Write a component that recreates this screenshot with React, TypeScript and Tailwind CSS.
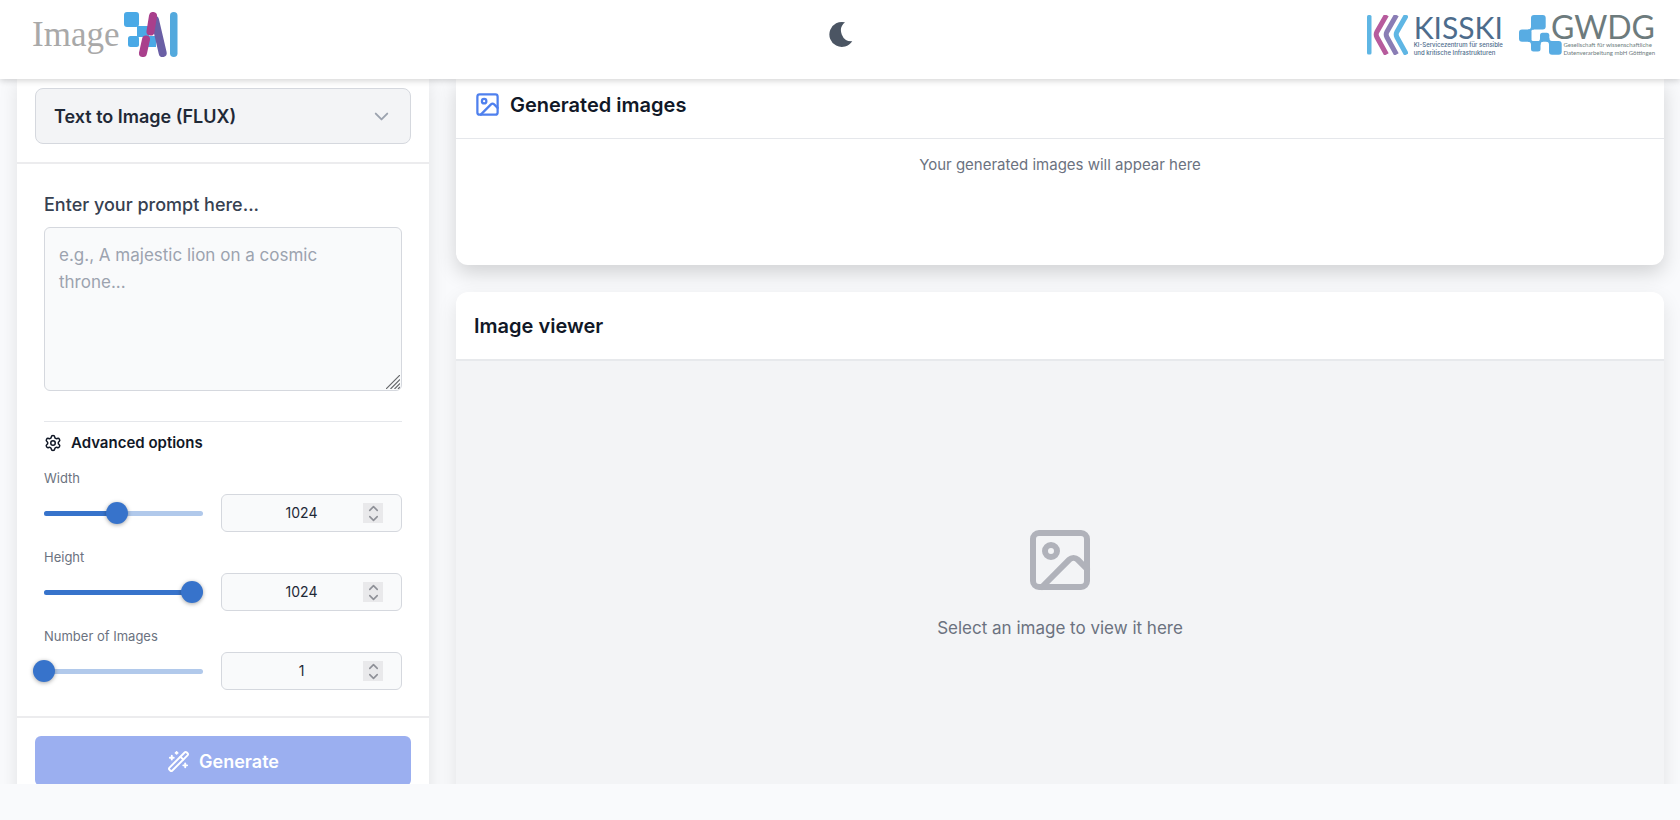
import React, { useId, useState } from "react";
import { ChevronDown, ChevronUp, Settings, WandSparkles } from "lucide-react";

function ImageAiLogo() {
  return (
    <a href="#" aria-label="Image AI" className="flex items-center gap-[5px]">
      <span className="font-['Liberation_Serif',serif] text-[35px] leading-10 text-[#a9a9a9]">Image</span>
      <svg className="h-[46px] w-[54px]" viewBox="0 0 54 46" fill="none">
        <g fill="#4aa9e6">
          <rect x="0" y="0" width="15" height="15" rx="3" />
          <path d="M13 14h12v11H13z" />
          <rect x="4" y="24" width="11" height="11" rx="2.5" />
          <path d="M24 24h8v11h-8z" />
        </g>
        <path d="M31 8 38.700 41" stroke="#6a5fa5" strokeWidth="8" strokeLinecap="round" />
        <path d="M29 4 26.500 19.500" stroke="#a93f8c" strokeWidth="8" strokeLinecap="round" />
        <path d="M22 27.500 19 41" stroke="#a93f8c" strokeWidth="8" strokeLinecap="round" />
        <rect x="46" y="0" width="7.500" height="45" rx="3.750" fill="#53a9dd" />
      </svg>
    </a>
  );
}

function KisskiLogo() {
  return (
    <a href="#" aria-label="KISSKI" className="flex items-center gap-[6px]">
      <svg className="h-10 w-[41px]" viewBox="0 0 41 40" fill="none">
        <rect x="0" y="0" width="4.500" height="39.500" rx="1.500" fill="#5fb6e4" />
        <g strokeWidth="5" strokeLinejoin="round">
          <path d="M19.500 0 9.800 17Q8.600 19.500 9.800 22L19.500 39.500" stroke="#b75b9d" />
          <path d="M29.500 0 19.800 17Q18.600 19.500 19.800 22L29.500 39.500" stroke="#8a7db5" />
          <path d="M39.500 0 29.800 17Q28.600 19.500 29.800 22L39.500 39.500" stroke="#5fb6e4" />
        </g>
      </svg>
      <span className="flex flex-col text-[#4d6c8c]">
        <span className="font-[Lato,sans-serif] text-[30px] leading-7">KISSKI</span>
        <span className="whitespace-nowrap text-[6px] font-medium leading-2">
          KI-Servicezentrum für sensible
          <br />
          und kritische Infrastrukturen
        </span>
      </span>
    </a>
  );
}

function GwdgLogo() {
  return (
    <a href="#" aria-label="GWDG" className="grid items-center">
      <svg className="h-10 w-11 [grid-area:1/1]" viewBox="0 0 44 40" fill="#58ace3">
        <rect x="12" y="0" width="14.700" height="14.500" rx="3" />
        <rect x="0" y="14.500" width="12.500" height="12.300" rx="3" />
        <rect x="12" y="26" width="9.500" height="10.500" rx="2.500" />
        <rect x="21" y="17.800" width="9.300" height="9" rx="2.500" />
        <rect x="30" y="26" width="12.700" height="13.700" rx="3" />
        <path d="M9 14.500q3 0 3-3h3v3q-3 0-3 3h-3zM9 26.800q3 0 3 3h3v-3.500q-3 0-3-3h-3zM18 26.500q3 0 3-3h3v3.300q-2.500 0-2.500 3H18zM27.500 26.800q2.500 0 2.500 3h3V26q-2.700 0-2.700-3h-3z" />
      </svg>
      <span className="ml-8 flex flex-col font-[Lato,sans-serif] text-[#6d7b7d] [grid-area:1/1]">
        <span className="text-[32px] leading-7">GWDG</span>
        <span className="self-end whitespace-nowrap text-[6px] leading-2">
          Gesellschaft für wissenschaftliche
          <br />
          Datenverarbeitung mbH Göttingen
        </span>
      </span>
    </a>
  );
}

function CrescentIcon({ className }: { className: string }) {
  return (
    <svg className={className} viewBox="-1 -1 25 27" fill="currentColor">
      <path d="M15 .3A12.500 12.500 0 1 0 22.300 19.300 10.700 10.700 0 0 1 15 .3z" />
    </svg>
  );
}

function PictureIcon({ className }: { className: string }) {
  return (
    <svg className={className} viewBox="0 0 24 24" fill="none" stroke="currentColor" strokeWidth="2" strokeLinecap="round" strokeLinejoin="round">
      <rect x="3" y="3" width="18" height="18" rx="2" />
      <circle cx="9" cy="9" r="2" />
      <path d="m21 15-3.086-3.086a2 2 0 0 0-2.828 0L6 21" />
    </svg>
  );
}

type RangeFieldProps = { label: string; min: number; max: number; initial: number };

function RangeField({ label, min, max, initial }: RangeFieldProps) {
  const id = useId();
  const [value, setValue] = useState(initial);
  const change = (next: number) => setValue(Math.min(max, Math.max(min, next)));
  const percent = ((value - min) / (max - min)) * 100;
  return (
    <div>
      <label htmlFor={id} className="block text-[13px] leading-5 text-[#6b7280]">
        {label}
      </label>
      <div className="mt-[6px] flex items-center gap-[18px]">
        <div className="grid min-w-0 flex-1 items-center">
          <div className="h-[5px] overflow-hidden rounded-full bg-[#b1c9eb] [grid-area:1/1]">
            <div className="h-full bg-[#3773cb]" style={{ width: `${percent}%` }} />
          </div>
          <input
            type="range"
            aria-label={`${label} slider`}
            min={min}
            max={max}
            value={value}
            onChange={(e) => change(Number(e.target.value))}
            className="z-10 -mx-[11px] h-[22px] w-[calc(100%+22px)] cursor-pointer appearance-none bg-transparent [grid-area:1/1] [&::-webkit-slider-thumb]:size-[22px] [&::-webkit-slider-thumb]:appearance-none [&::-webkit-slider-thumb]:rounded-full [&::-webkit-slider-thumb]:bg-[#3773cb] [&::-webkit-slider-thumb]:shadow-[0_1px_4px_rgba(0,0,0,0.35)]"
          />
        </div>
        <div className="flex h-[38px] w-[181px] items-center rounded-md border border-[#d5d8de] bg-[#f9fafb] px-[18px]">
          <input
            id={id}
            type="number"
            min={min}
            max={max}
            value={value}
            onChange={(e) => change(Number(e.target.value))}
            className="w-full min-w-0 flex-1 appearance-none bg-transparent text-center text-[14px] leading-5 text-[#1f2937] outline-none [-moz-appearance:textfield] [&::-webkit-inner-spin-button]:appearance-none"
          />
          <div className="flex flex-col bg-[#e9e9eb] text-[#8e9097]">
            <button type="button" aria-label={`Increase ${label}`} onClick={() => change(value + 1)} className="flex h-[10px] w-5 items-center justify-center">
              <ChevronUp className="size-[15px] shrink-0" strokeWidth={2.5} />
            </button>
            <button type="button" aria-label={`Decrease ${label}`} onClick={() => change(value - 1)} className="flex h-[10px] w-5 items-center justify-center">
              <ChevronDown className="size-[15px] shrink-0" strokeWidth={2.5} />
            </button>
          </div>
        </div>
      </div>
    </div>
  );
}

export default function App() {
  return (
    <div className="flex h-screen flex-col bg-[#f9fafc] pb-9 font-[Inter,sans-serif] text-[#111827]">
      <header className="z-20 grid h-[79px] shrink-0 grid-cols-[1fr_auto_1fr] items-center bg-white px-[25px] pb-[10px] pl-8 shadow-[0_2px_6px_rgba(0,0,0,0.16)]">
        <ImageAiLogo />
        <button type="button" aria-label="Toggle dark mode" className="pr-1 text-[#4b5563]">
          <CrescentIcon className="h-[27px] w-[25px]" />
        </button>
        <div className="flex items-center justify-end gap-4">
          <KisskiLogo />
          <GwdgLogo />
        </div>
      </header>

      <main className="flex min-h-0 flex-1 gap-[27px] overflow-hidden px-[17px] pr-4">
        <aside className="w-[412px] shrink-0 self-start bg-white shadow-[0_4px_18px_rgba(0,0,0,0.1)]">
          <div className="border-b-2 border-[#ececee] px-[18px] pt-[9px] pb-[18px]">
            <div className="grid items-center">
              <select
                aria-label="Mode"
                className="h-14 w-full appearance-none rounded-lg border border-[#d5d8de] bg-[#f3f4f6] px-[18px] text-[18px] font-semibold text-[#1f2937] [grid-area:1/1]"
              >
                <option>Text to Image (FLUX)</option>
              </select>
              <ChevronDown className="pointer-events-none mr-[18px] size-[23px] justify-self-end text-[#9ca3af] [grid-area:1/1]" />
            </div>
          </div>

          <div className="px-[27px] pt-[27px] pb-[26px]">
            <label htmlFor="prompt" className="block text-[18px] font-medium leading-7 text-[#374151]">
              Enter your prompt here...
            </label>
            <div className="mt-2 grid">
              <textarea
                id="prompt"
                placeholder="e.g., A majestic lion on a cosmic throne..."
                className="block h-[164px] w-full resize-y rounded-md border border-[#d5d8de] bg-[#f9fafb] py-[14px] pr-6 pl-[14px] text-[17px] leading-[27px] [grid-area:1/1] placeholder:text-[#9ca3af] [&::-webkit-resizer]:bg-transparent"
              />
              <svg
                className="pointer-events-none mr-[2px] mb-[2px] size-[14px] self-end justify-self-end [grid-area:1/1]"
                viewBox="0 0 14 14"
                stroke="#66686b"
                strokeWidth="1.2"
              >
                <path d="M0 14 14 0M4.500 14 14 4.500M8.500 14 14 8.500M12 14l2-2" />
              </svg>
            </div>
            <section className="mt-[30px] border-t border-[#e5e7eb] pt-[7px]">
              <h3 className="flex items-center gap-[9px] text-[15px] font-semibold leading-[27px]">
                <Settings className="size-[18px]" />
                Advanced options
              </h3>
              <div className="mt-3 flex flex-col gap-[15px]">
                <RangeField label="Width" min={256} max={1920} initial={1024} />
                <RangeField label="Height" min={256} max={1080} initial={1024} />
                <RangeField label="Number of Images" min={1} max={4} initial={1} />
              </div>
            </section>
          </div>

          <div className="border-t-2 border-[#ececee] p-[18px]">
            <button
              type="button"
              className="flex h-[50px] w-full items-center justify-center gap-[9px] rounded-md bg-[#9baff0] text-[18px] font-semibold text-white"
            >
              <WandSparkles className="size-[23px]" />
              Generate
            </button>
          </div>
        </aside>

        <div className="flex min-w-0 flex-1 flex-col gap-[27px]">
          <section className="h-[186px] shrink-0 rounded-b-xl bg-white shadow-[0_8px_20px_rgba(0,0,0,0.16)]">
            <div className="flex h-[60px] items-center gap-[9px] border-b border-[#e5e7eb] px-[18px] pb-2">
              <PictureIcon className="size-[27px] text-[#4f80ee]" />
              <h2 className="text-[20px] font-semibold leading-7">Generated images</h2>
            </div>
            <p className="pt-[14px] text-center text-[15px] leading-6 text-[#6b7280]">Your generated images will appear here</p>
          </section>

          <section className="z-10 flex min-h-[513px] flex-1 shrink-0 flex-col rounded-t-xl bg-white shadow-[0_8px_20px_rgba(0,0,0,0.1)]">
            <div className="flex h-[69px] items-center border-b-2 border-[#e7e9ec] px-[18px]">
              <h2 className="text-[20px] font-semibold leading-7">Image viewer</h2>
            </div>
            <div className="flex flex-1 flex-col items-center justify-center gap-[18px] bg-[#f3f4f6]">
              <PictureIcon className="size-[72px] text-[#b0b2ba]" />
              <p className="text-[17px] leading-7 text-[#6b7280]">Select an image to view it here</p>
            </div>
          </section>
        </div>
      </main>
    </div>
  );
}
